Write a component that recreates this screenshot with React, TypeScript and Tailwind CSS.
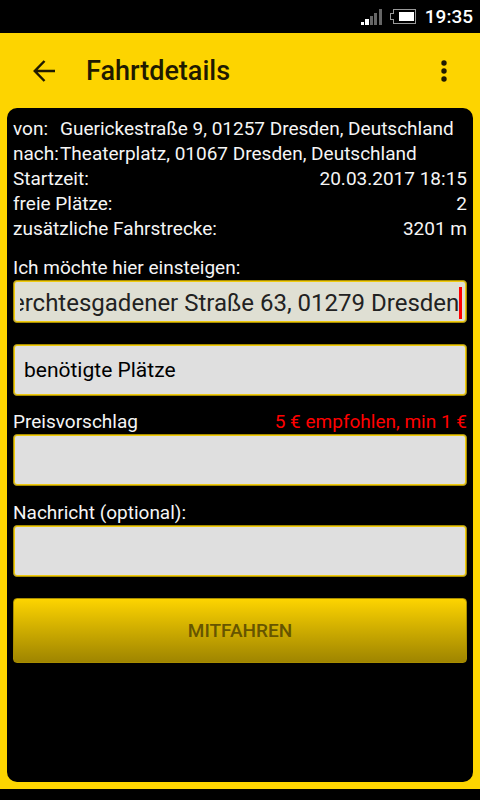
import { useLayoutEffect, useRef } from "react";
import type { ReactNode } from "react";

const FRAME = "rounded border border-[#a88d00] inset-ring inset-ring-[#f0cb10]";
const FIELD = `${FRAME} block h-[52px] w-full bg-[#dfdfdf] px-2.5 text-[21px] text-black outline-none`;

function StatusBar() {
  return (
    <div className="flex h-[33px] shrink-0 items-center justify-end bg-black pr-[7px] text-white">
      <svg className="mr-2 h-[18px] w-[22px]" viewBox="0 0 22 18" shapeRendering="crispEdges" aria-label="Signal">
        <rect x="1" y="14" width="3" height="3" fill="#fff" />
        <rect x="5" y="11" width="4" height="6" fill="#fff" />
        <rect x="10" y="8" width="3" height="9" fill="#666" />
        <rect x="14" y="5" width="3" height="12" fill="#666" />
        <rect x="19" y="1" width="3" height="16" fill="#666" />
      </svg>
      <svg className="mr-[9px] h-[15px] w-[26px]" viewBox="0 0 26 15" shapeRendering="crispEdges" aria-label="Akku">
        <path d="M3.5 0.5H25.5V14.5H3.5V10.500H0.500V4.500H3.5Z" fill="none" stroke="#999" />
        <rect x="9" y="3" width="15" height="9" fill="#fff" />
      </svg>
      <span className="text-[19px] leading-6 font-medium">19:35</span>
    </div>
  );
}

function Header() {
  return (
    <header className="flex h-[75px] shrink-0 items-center pr-4 pl-6 text-[#1f1a00]">
      <button type="button" aria-label="Zurück" className="flex size-10 items-center justify-center">
        <svg className="h-[22px] w-[22px]" viewBox="0 0 22 22" fill="none" stroke="currentColor" strokeWidth="2.500">
          <path d="M22 11H2M11.500 1L1.800 11L11.500 21" />
        </svg>
      </button>
      <h1 className="ml-[22px] flex-1 text-[27px] leading-8 font-medium">Fahrtdetails</h1>
      <button type="button" aria-label="Menü" className="flex size-10 items-center justify-center">
        <svg className="h-6 w-6" viewBox="0 0 24 24" fill="currentColor">
          <circle cx="12" cy="4" r="2.700" />
          <circle cx="12" cy="12" r="2.700" />
          <circle cx="12" cy="20" r="2.700" />
        </svg>
      </button>
    </header>
  );
}

function Place({ label, children }: { label: string; children: ReactNode }) {
  return (
    <div className="flex">
      <dt className="w-[47px] shrink-0 whitespace-nowrap">{label}</dt>
      <dd>{children}</dd>
    </div>
  );
}

function Detail({ label, children }: { label: string; children: ReactNode }) {
  return (
    <div className="flex justify-between">
      <dt>{label}</dt>
      <dd>{children}</dd>
    </div>
  );
}

function PickupField() {
  const input = useRef<HTMLInputElement>(null);

  useLayoutEffect(() => {
    const showEnd = () => {
      if (input.current) input.current.scrollLeft = input.current.scrollWidth;
    };
    showEnd();
    document.fonts.ready.then(showEnd);
  }, []);

  return (
    <div className={`${FRAME} flex h-[43px] items-center bg-[#dfdfd3] pt-0.5 pr-1 pl-1.5`}>
      <input
        ref={input}
        id="pickup"
        type="text"
        defaultValue="Berchtesgadener Straße 63, 01279 Dresden"
        className="h-8 min-w-0 flex-1 bg-transparent text-[24px] text-[#222] outline-none"
      />
      <span className="h-8 w-[3px] shrink-0 bg-[#ff0000]" />
    </div>
  );
}

export default function App() {
  return (
    <div className="flex min-h-screen flex-col bg-[#fdd400] font-[Roboto,sans-serif]">
      <StatusBar />
      <Header />
      <main className="mx-[7px] mb-[7px] flex-1 rounded-[10px] bg-black px-1.5 pt-2 text-[19px] leading-6 text-[#f5f5f5]">
        <dl className="leading-[25px]">
          <Place label="von:">Guerickestraße 9, 01257 Dresden, Deutschland</Place>
          <Place label="nach:">Theaterplatz, 01067 Dresden, Deutschland</Place>
          <Detail label="Startzeit:">20.03.2017 18:15</Detail>
          <Detail label="freie Plätze:">2</Detail>
          <Detail label="zusätzliche Fahrstrecke:">3201 m</Detail>
        </dl>
        <form onSubmit={(event) => event.preventDefault()}>
          <label htmlFor="pickup" className="mt-[15px] block">
            Ich möchte hier einsteigen:
          </label>
          <PickupField />
          <select aria-label="benötigte Plätze" className={`${FIELD} mt-[21px] appearance-none`}>
            <option>benötigte Plätze</option>
          </select>
          <div className="mt-3.5 flex justify-between">
            <label htmlFor="price">Preisvorschlag</label>
            <span className="text-[#ff0000]">5 € empfohlen, min 1 €</span>
          </div>
          <input id="price" type="text" className={FIELD} />
          <label htmlFor="message" className="mt-[15px] block">
            Nachricht (optional):
          </label>
          <input id="message" type="text" className={FIELD} />
          <button
            type="submit"
            className="mt-[21px] block h-[65px] w-full rounded border border-[#a88d00] bg-linear-to-b from-[#fdd400] to-[#9f8500] text-[19px] font-medium text-[#665500]"
          >
            MITFAHREN
          </button>
        </form>
      </main>
      <div className="h-[11px] shrink-0 bg-black" />
    </div>
  );
}
